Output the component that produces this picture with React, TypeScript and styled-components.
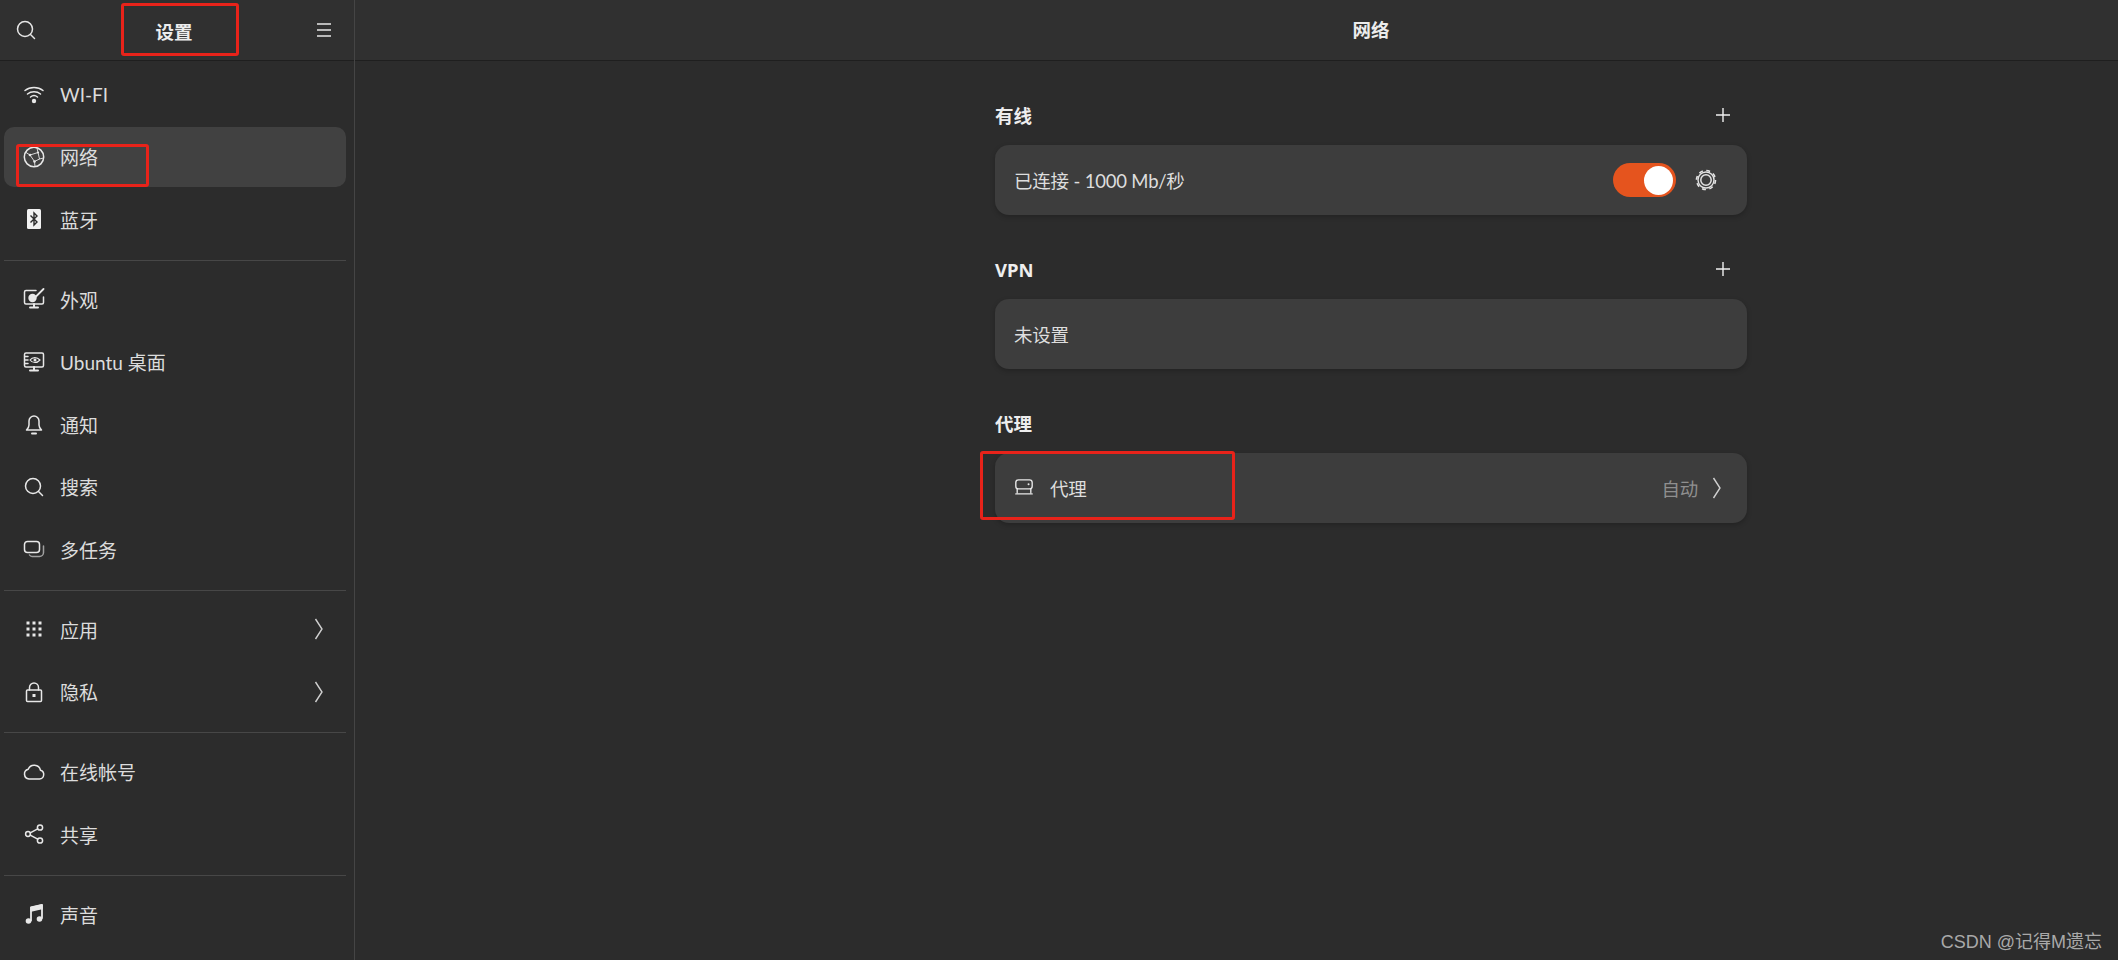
import React from "react";
import styled, { createGlobalStyle } from "styled-components";

const GlobalStyle = createGlobalStyle`
    html, body {
        margin: 0;
        padding: 0;
        height: 100%;
        background: #2c2c2c;
        overflow: hidden;
    }
    body {
        font-family: "Noto Sans", "Noto Sans CJK SC", sans-serif;
        color: #e4e4e4;
    }
`;

const Window = styled.div`
    position: relative;
    display: flex;
    width: 2118px;
    height: 960px;
    overflow: hidden;
    background: #2c2c2c;
`;

const Sidebar = styled.aside`
    width: 354px;
    flex-shrink: 0;
    border-right: 1px solid #454545;
    display: flex;
    flex-direction: column;
`;

const SideHeader = styled.header`
    height: 60px;
    flex-shrink: 0;
    display: grid;
    grid-template-columns: 52px 1fr 60px;
    align-items: center;
    justify-items: center;
    background: #303030;
    border-bottom: 1px solid #1f1f1f;
    box-sizing: content-box;
`;

const SideTitle = styled.h1`
    margin: 0;
    font-size: 18.5px;
    font-weight: 700;
    color: #ececec;
    transform: translate(1px, 1px);
`;

const HeaderButton = styled.span`
    display: flex;
    align-items: center;
    justify-content: center;
    color: #e6e6e6;
`;

const Nav = styled.nav`
    display: flex;
    flex-direction: column;
    padding: 3px 8px 0 4px;
`;

const Row = styled.div<{ $active?: boolean }>`
    height: 60px;
    margin-bottom: 2.5px;
    padding: 0 22px 0 19px;
    display: flex;
    align-items: center;
    gap: 15px;
    border-radius: 10px;
    font-family: "Lato", "Noto Sans CJK SC", sans-serif;
    font-size: 19px;
    color: #dcdcdc;
    background: ${(p) => (p.$active ? "#414141" : "transparent")};
`;

const RowIcon = styled.span`
    width: 22px;
    height: 22px;
    flex-shrink: 0;
    display: flex;
    align-items: center;
    justify-content: center;
    color: #e8e8e8;
`;

const RowLabel = styled.span`
    flex: 1;
    white-space: nowrap;
`;

const Divider = styled.hr`
    width: 100%;
    height: 1px;
    margin: 8px 0 8.5px;
    border: 0;
    background: #474747;
`;

const Main = styled.main`
    flex: 1;
    display: flex;
    flex-direction: column;
`;

const MainHeader = styled.header`
    height: 60px;
    flex-shrink: 0;
    padding-left: 640px;
    background: #303030;
    border-bottom: 1px solid #1f1f1f;
    box-sizing: content-box;
`;

const MainTitle = styled.h2`
    width: 752px;
    margin: 0;
    line-height: 60px;
    text-align: center;
    font-size: 18.5px;
    font-weight: 700;
    color: #ececec;
`;

const Content = styled.div`
    width: 752px;
    margin-left: 640px;
    padding-top: 39px;
    display: flex;
    flex-direction: column;
    gap: 39px;
`;

const Section = styled.section`
    display: flex;
    flex-direction: column;
    gap: 15px;
`;

const SectionHead = styled.div`
    height: 30px;
    display: flex;
    align-items: center;
    justify-content: space-between;
    padding-right: 16px;
`;

const SectionTitle = styled.h3`
    margin: 0;
    font-size: 18.5px;
    font-weight: 700;
    color: #eeeeee;
`;

const Card = styled.div`
    height: 70px;
    padding: 0 20px 0 19px;
    display: flex;
    align-items: center;
    border-radius: 14px;
    background: #3d3d3d;
    box-shadow: 0 2px 5px rgba(0, 0, 0, 0.22);
    font-family: "Lato", "Noto Sans CJK SC", sans-serif;
    font-size: 18.5px;
    letter-spacing: -0.2px;
    color: #dedede;
`;

const CardLabel = styled.span`
    flex: 1;
`;

const CardIcon = styled.span`
    display: flex;
    margin-right: 16px;
    color: #e8e8e8;
`;

const CardValue = styled.span`
    margin-right: 14px;
    color: #8f8f8f;
`;

const CardEnd = styled.span`
    display: flex;
    margin-right: 5px;
`;

const GearButton = styled.span`
    display: flex;
    margin-right: 10px;
`;

const Toggle = styled.span`
    width: 63px;
    height: 34px;
    margin-right: 19px;
    padding: 2.5px 3px;
    box-sizing: border-box;
    display: flex;
    justify-content: flex-end;
    border-radius: 17px;
    background: #e5541e;
`;

const Knob = styled.span`
    width: 29px;
    height: 29px;
    border-radius: 50%;
    background: #ffffff;
`;

const Annotation = styled.div<{ $x: number; $y: number; $w: number; $h: number }>`
    position: absolute;
    left: ${(p) => p.$x}px;
    top: ${(p) => p.$y}px;
    width: ${(p) => p.$w}px;
    height: ${(p) => p.$h}px;
    box-sizing: border-box;
    border: 3px solid #e8231a;
    border-radius: 3px;
`;

const Watermark = styled.span`
    position: absolute;
    right: 16px;
    bottom: 7px;
    font-family: "Liberation Sans", "Noto Sans CJK SC", sans-serif;
    font-size: 18px;
    color: #a9a9a9;
`;

const Svg = ({ children, size = 22 }: { children: React.ReactNode; size?: number }) => (
    <svg
        width={size}
        height={size}
        viewBox="0 0 22 22"
        fill="none"
        stroke="currentColor"
        strokeWidth="1.5"
        strokeLinecap="round"
        strokeLinejoin="round"
    >
        {children}
    </svg>
);

const SearchIcon = () => (
    <Svg>
        <circle cx="10" cy="10" r="7.5" />
        <path d="M15.5 15.5 19.5 19.5" />
    </Svg>
);

const MenuIcon = () => (
    <Svg>
        <path d="M4 5h14M4 11h14M4 17h14" strokeLinecap="butt" />
    </Svg>
);

const WifiIcon = () => (
    <Svg>
        <path d="M2 7.500c5-4 13-4 18 0M4.500 11c3.600-3 9.400-3 13 0M7.500 14c2-1.600 5-1.600 7 0" />
        <circle cx="11" cy="18" r="2.200" fill="currentColor" stroke="none" />
    </Svg>
);

const GlobeIcon = () => (
    <Svg>
        <circle cx="11" cy="11" r="9.700" />
        <path d="M3 6.500 7 9l8-2.500 1.500 6.500-5 2.500L7 9M15 6.500l-1-4.500M16.500 13l4-1M11.500 15.500l.5 5" strokeWidth="0.900" />
        <circle cx="7" cy="9" r="1.300" fill="currentColor" stroke="none" />
        <circle cx="15" cy="6.500" r="1.100" fill="currentColor" stroke="none" />
        <circle cx="11.500" cy="15.500" r="1.300" fill="currentColor" stroke="none" />
    </Svg>
);

const BluetoothIcon = () => (
    <svg width="22" height="22" viewBox="0 0 22 22">
        <rect x="4" y="1" width="14" height="20" rx="1.500" fill="#f2f2f2" />
        <path d="M7.500 7.500 14 14l-3 3V5l3 3-6.500 6.500" fill="none" stroke="#2c2c2c" strokeWidth="1.400" />
    </svg>
);

const AppearanceIcon = () => (
    <Svg>
        <path d="M13 2.500H3a1.500 1.500 0 0 0-1.500 1.500v10.500A1.500 1.500 0 0 0 3 16h16a1.500 1.500 0 0 0 1.500-1.500V9" />
        <path d="M7 19.500h8M11 16v3.500" strokeWidth="2" />
        <path d="M20.500 1 11 10.500" strokeWidth="1.800" />
        <circle cx="9.500" cy="10" r="4.200" fill="currentColor" stroke="none" />
    </Svg>
);

const DesktopIcon = () => (
    <Svg>
        <rect x="1.500" y="2" width="19" height="14" rx="1.500" />
        <path d="M7 19.500h8M11 16v3.500" strokeWidth="2" />
        <path d="M2 5.500h3M2 9h3M2 12.500h3" />
        <path d="M7 9c2.500-3.300 7-3.300 10 0-3 3.300-7.500 3.300-10 0z" strokeWidth="1.200" />
        <circle cx="12" cy="9" r="1.500" fill="currentColor" stroke="none" />
    </Svg>
);

const BellIcon = () => (
    <Svg>
        <path d="M3.500 17h15c-1.500-1.500-2.500-2.500-2.500-5V8a5 5 0 0 0-10 0v4c0 2.500-1 3.500-2.500 5z" />
        <path d="M9 20.500h4" strokeWidth="2" />
    </Svg>
);

const TasksIcon = () => (
    <Svg>
        <rect x="1.500" y="3.500" width="15" height="11" rx="3" />
        <path d="M20.500 8v6.500a4 4 0 0 1-4 4H9a3 3 0 0 1-2.500-1.500" stroke="#a0a0a0" />
    </Svg>
);

const GridIcon = () => (
    <svg width="22" height="22" viewBox="0 0 22 22" fill="currentColor">
        {[5, 11, 17].flatMap((y) =>
            [5, 11, 17].map((x) => <rect key={`${x}-${y}`} x={x - 1.5} y={y - 1.5} width="3" height="3" />)
        )}
    </svg>
);

const LockIcon = () => (
    <Svg>
        <rect x="3.500" y="9" width="15" height="11.500" rx="1" />
        <path d="M6.500 9V6.500a4.500 4.500 0 0 1 9 0V9" />
        <rect x="9.500" y="13" width="3" height="3" fill="currentColor" stroke="none" />
    </Svg>
);

const CloudIcon = () => (
    <Svg>
        <path d="M6 18h10.500a4.500 4.500 0 0 0 1-8.800 6.500 6.500 0 0 0-12.300-1A5 5 0 0 0 6 18z" />
    </Svg>
);

const ShareIcon = () => (
    <Svg>
        <circle cx="5" cy="11" r="2.400" />
        <circle cx="17" cy="4.500" r="2.600" />
        <circle cx="17" cy="17.500" r="2.600" />
        <path d="M7.200 9.800 14.700 5.800M7.200 12.200l7.500 4" />
    </Svg>
);

const MusicIcon = () => (
    <Svg>
        <path d="M8 17.500V4.500L19 2v13" strokeWidth="1.800" />
        <path d="M8 4.500 19 2v3.500L8 8z" fill="currentColor" />
        <circle cx="5.500" cy="18" r="2.800" fill="currentColor" stroke="none" />
        <circle cx="16.500" cy="16" r="2.800" fill="currentColor" stroke="none" />
    </Svg>
);

const Chevron = () => (
    <svg width="10" height="22" viewBox="0 0 10 22" fill="none" stroke="#d0d0d0" strokeWidth="1.400">
        <path d="M1.500 1 8 11 1.500 21" />
    </svg>
);

const PlusIcon = () => (
    <svg width="16" height="16" viewBox="0 0 16 16" stroke="#f0f0f0" strokeWidth="1.400">
        <path d="M8 1v14M1 8h14" />
    </svg>
);

const GearIcon = () => (
    <svg width="22" height="22" viewBox="0 0 22 22" fill="none" stroke="#e4e4e4">
        <circle cx="11" cy="11" r="5.200" strokeWidth="1.500" />
        <circle cx="11" cy="11" r="8" strokeWidth="1.400" />
        <circle cx="11" cy="11" r="9.500" strokeWidth="1.600" strokeDasharray="3.900 3.560" />
    </svg>
);

const ProxyIcon = () => (
    <Svg size={20}>
        <rect x="2" y="2" width="18" height="10" rx="3" />
        <path d="M3.500 12v4M18.500 12v4M2 17.500h18" />
        <circle cx="16" cy="7" r="1.100" fill="currentColor" stroke="none" />
    </Svg>
);

type Item = { label: string; icon: React.ReactNode; active?: boolean; more?: boolean };

const groups: Item[][] = [
    [
        { label: "WI-FI", icon: <WifiIcon /> },
        { label: "网络", icon: <GlobeIcon />, active: true },
        { label: "蓝牙", icon: <BluetoothIcon /> },
    ],
    [
        { label: "外观", icon: <AppearanceIcon /> },
        { label: "Ubuntu 桌面", icon: <DesktopIcon /> },
        { label: "通知", icon: <BellIcon /> },
        { label: "搜索", icon: <SearchIcon /> },
        { label: "多任务", icon: <TasksIcon /> },
    ],
    [
        { label: "应用", icon: <GridIcon />, more: true },
        { label: "隐私", icon: <LockIcon />, more: true },
    ],
    [
        { label: "在线帐号", icon: <CloudIcon /> },
        { label: "共享", icon: <ShareIcon /> },
    ],
    [{ label: "声音", icon: <MusicIcon /> }],
];

export default function App() {
    return (
        <Window>
            <GlobalStyle />
            <Sidebar>
                <SideHeader>
                    <HeaderButton><SearchIcon /></HeaderButton>
                    <SideTitle>设置</SideTitle>
                    <HeaderButton><MenuIcon /></HeaderButton>
                </SideHeader>
                <Nav>
                    {groups.map((group, i) => (
                        <React.Fragment key={i}>
                            {i > 0 && <Divider />}
                            {group.map((item) => (
                                <Row key={item.label} $active={item.active}>
                                    <RowIcon>{item.icon}</RowIcon>
                                    <RowLabel>{item.label}</RowLabel>
                                    {item.more && <Chevron />}
                                </Row>
                            ))}
                        </React.Fragment>
                    ))}
                </Nav>
            </Sidebar>
            <Main>
                <MainHeader>
                    <MainTitle>网络</MainTitle>
                </MainHeader>
                <Content>
                    <Section>
                        <SectionHead>
                            <SectionTitle>有线</SectionTitle>
                            <PlusIcon />
                        </SectionHead>
                        <Card>
                            <CardLabel>已连接 - 1000 Mb/秒</CardLabel>
                            <Toggle><Knob /></Toggle>
                            <GearButton><GearIcon /></GearButton>
                        </Card>
                    </Section>
                    <Section>
                        <SectionHead>
                            <SectionTitle>VPN</SectionTitle>
                            <PlusIcon />
                        </SectionHead>
                        <Card>
                            <CardLabel>未设置</CardLabel>
                        </Card>
                    </Section>
                    <Section>
                        <SectionHead>
                            <SectionTitle>代理</SectionTitle>
                        </SectionHead>
                        <Card>
                            <CardIcon><ProxyIcon /></CardIcon>
                            <CardLabel>代理</CardLabel>
                            <CardValue>自动</CardValue>
                            <CardEnd><Chevron /></CardEnd>
                        </Card>
                    </Section>
                </Content>
            </Main>
            <Annotation $x={121} $y={3} $w={118} $h={53} />
            <Annotation $x={16} $y={144} $w={133} $h={43} />
            <Annotation $x={980} $y={451} $w={255} $h={69} />
            <Watermark>CSDN @记得M遗忘</Watermark>
        </Window>
    );
}
